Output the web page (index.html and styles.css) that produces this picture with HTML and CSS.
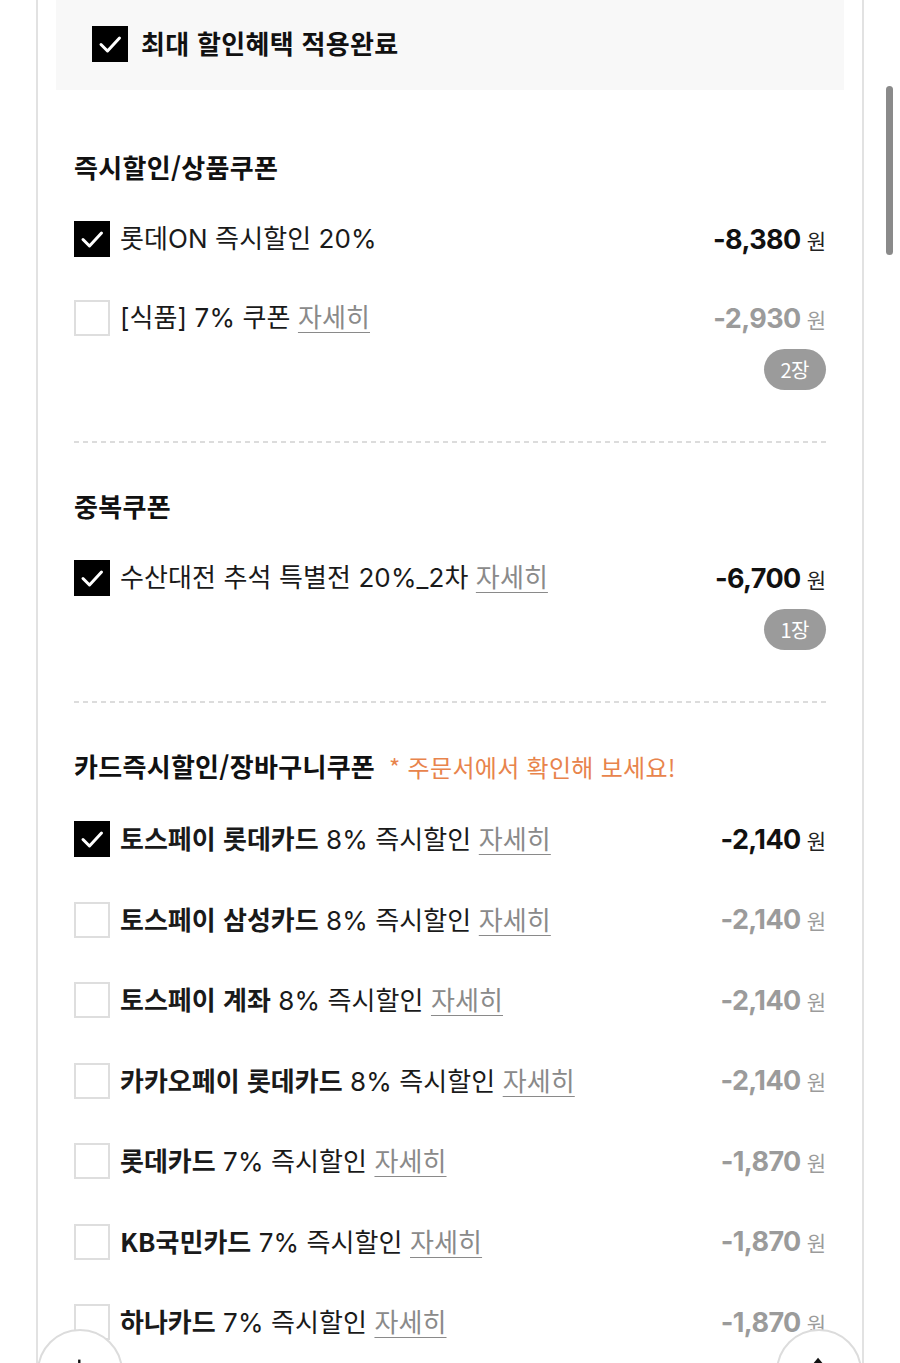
FILE: index.html
```html
<!DOCTYPE html>
<html lang="ko">
<head>
<meta charset="utf-8">
<title>할인혜택</title>
<link rel="stylesheet" href="styles.css">
</head>
<body>
<div class="sheet">
  <div class="summary">
    <span class="cb on"><svg viewBox="0 0 36 36"><path d="M9 18.5 L15.5 25 L27.5 12" /></svg></span>
    <span class="summary-text">최대 할인혜택 적용완료</span>
  </div>

  <section class="group first">
    <h2 class="group-title">즉시할인/상품쿠폰</h2>
    <ul class="items">
      <li class="item">
        <div class="line">
          <span class="cb on"><svg viewBox="0 0 36 36"><path d="M9 18.5 L15.5 25 L27.5 12" /></svg></span>
          <span class="label">롯데ON 즉시할인 20%</span>
          <span class="price"><b>-8,380</b><i>원</i></span>
        </div>
      </li>
      <li class="item off">
        <div class="line">
          <span class="cb"></span>
          <span class="label">[식품] 7% 쿠폰 <u>자세히</u></span>
          <span class="price"><b>-2,930</b><i>원</i></span>
        </div>
        <div class="badge-row"><span class="badge">2장</span></div>
      </li>
    </ul>
  </section>

  <section class="group">
    <h2 class="group-title">중복쿠폰</h2>
    <ul class="items">
      <li class="item">
        <div class="line">
          <span class="cb on"><svg viewBox="0 0 36 36"><path d="M9 18.5 L15.5 25 L27.5 12" /></svg></span>
          <span class="label">수산대전 추석 특별전 20%_2차 <u>자세히</u></span>
          <span class="price"><b>-6,700</b><i>원</i></span>
        </div>
        <div class="badge-row"><span class="badge">1장</span></div>
      </li>
    </ul>
  </section>

  <section class="group last">
    <h2 class="group-title">카드즉시할인/장바구니쿠폰<span class="note">* 주문서에서 확인해 보세요!</span></h2>
    <ul class="items cards">
      <li class="item">
        <div class="line">
          <span class="cb on"><svg viewBox="0 0 36 36"><path d="M9 18.5 L15.5 25 L27.5 12" /></svg></span>
          <span class="label"><strong>토스페이 롯데카드</strong> 8% 즉시할인 <u>자세히</u></span>
          <span class="price"><b>-2,140</b><i>원</i></span>
        </div>
      </li>
      <li class="item off">
        <div class="line">
          <span class="cb"></span>
          <span class="label"><strong>토스페이 삼성카드</strong> 8% 즉시할인 <u>자세히</u></span>
          <span class="price"><b>-2,140</b><i>원</i></span>
        </div>
      </li>
      <li class="item off">
        <div class="line">
          <span class="cb"></span>
          <span class="label"><strong>토스페이 계좌</strong> 8% 즉시할인 <u>자세히</u></span>
          <span class="price"><b>-2,140</b><i>원</i></span>
        </div>
      </li>
      <li class="item off">
        <div class="line">
          <span class="cb"></span>
          <span class="label"><strong>카카오페이 롯데카드</strong> 8% 즉시할인 <u>자세히</u></span>
          <span class="price"><b>-2,140</b><i>원</i></span>
        </div>
      </li>
      <li class="item off">
        <div class="line">
          <span class="cb"></span>
          <span class="label"><strong>롯데카드</strong> 7% 즉시할인 <u>자세히</u></span>
          <span class="price"><b>-1,870</b><i>원</i></span>
        </div>
      </li>
      <li class="item off">
        <div class="line">
          <span class="cb"></span>
          <span class="label"><strong>KB국민카드</strong> 7% 즉시할인 <u>자세히</u></span>
          <span class="price"><b>-1,870</b><i>원</i></span>
        </div>
      </li>
      <li class="item off">
        <div class="line">
          <span class="cb"></span>
          <span class="label"><strong>하나카드</strong> 7% 즉시할인 <u>자세히</u></span>
          <span class="price"><b>-1,870</b><i>원</i></span>
        </div>
      </li>
    </ul>
  </section>
</div>

<div class="scrollbar"></div>

<button class="fab fab-left" aria-label="이전">
  <svg viewBox="0 0 86 86"><rect x="41" y="30" width="2.5" height="20" fill="#111"/></svg>
</button>
<button class="fab fab-right" aria-label="맨 위로">
  <svg viewBox="0 0 86 86"><path d="M42 28 L32 40 L52 40 Z" fill="#111"/></svg>
</button>
</body>
</html>
```
FILE: styles.css
```css
html, body {
  margin: 0;
  padding: 0;
  overflow: hidden;
  height: 1363px;
  background: #fff;
}
body {
  font-family: "Inter", "Noto Sans CJK KR", sans-serif;
  color: #111;
}
.sheet {
  margin-left: 36px;
  width: 824px;
  border-left: 2px solid #e2e2e2;
  border-right: 2px solid #e2e2e2;
  min-height: 1363px;
}
.summary {
  margin: 0 18px;
  height: 90px;
  background: #f8f8f8;
  display: flex;
  align-items: center;
  padding-left: 36px;
  gap: 13px;
}
.summary .cb { margin-top: -2px; }
.summary-text {
  font-family: "Noto Sans CJK KR", sans-serif;
  font-weight: 700;
  font-size: 26px;
  letter-spacing: 0.3px;
  line-height: 36px;
  margin-top: -4px;
}
.cb {
  flex: 0 0 auto;
  width: 36px;
  height: 36px;
  box-sizing: border-box;
  border: 2px solid #dedede;
  background: #fff;
  display: inline-flex;
}
.cb.on {
  background: #000;
  border-color: #000;
}
.cb svg {
  width: 36px;
  height: 36px;
  margin: -2px;
}
.cb svg path {
  fill: none;
  stroke: #fff;
  stroke-width: 3;
  stroke-linecap: round;
  stroke-linejoin: round;
}
.group {
  margin: 0 36px;
  padding: 45px 0 53px;
  background-image: repeating-linear-gradient(to right, #dcdcdc 0 5px, transparent 5px 9px);
  background-size: 100% 2px;
  background-repeat: no-repeat;
  background-position: left bottom;
}
.group.first { padding-top: 59px; }
.group.last { background: none; padding-bottom: 0; }
.group-title {
  margin: 0 0 36px;
  font-family: "Noto Sans CJK KR", sans-serif;
  font-weight: 700;
  font-size: 26px;
  letter-spacing: 0.3px;
  line-height: 36px;
  color: #111;
}
.note {
  margin-left: 14px;
  font-weight: 400;
  font-size: 24px;
  letter-spacing: 0.3px;
  color: #e8844c;
}
.items {
  list-style: none;
  margin: 0;
  padding: 0;
  display: flex;
  flex-direction: column;
  gap: 43px;
}
.items.cards { gap: 44.5px; }
.line {
  display: flex;
  align-items: center;
  height: 36px;
}
.label {
  flex: 1;
  margin-left: 10px;
  font-size: 26px;
  letter-spacing: 0.1px;
  line-height: 36px;
  color: #1a1a1a;
  white-space: nowrap;
}
.label strong {
  font-family: "Noto Sans CJK KR", sans-serif;
  font-weight: 700;
  letter-spacing: 0;
}
.label u {
  color: #8a8a8a;
  text-decoration-thickness: 1px;
  text-underline-offset: 5px;
}
.price {
  display: flex;
  align-items: baseline;
  white-space: nowrap;
}
.price b {
  font-family: "Inter", sans-serif;
  font-weight: 700;
  font-size: 27px;
  letter-spacing: -0.6px;
  color: #111;
}
.price i {
  font-style: normal;
  font-family: "Noto Sans CJK KR", sans-serif;
  font-size: 21px;
  margin-left: 6px;
  color: #222;
}
.item.off .price b,
.item.off .price i { color: #9b9b9b; }
.badge-row {
  display: flex;
  justify-content: flex-end;
  margin-top: 13px;
}
.badge {
  height: 41px;
  line-height: 41px;
  padding: 0 17px;
  border-radius: 21px;
  background: #9b9b9b;
  color: #fff;
  font-family: "Noto Sans CJK KR", sans-serif;
  font-size: 20px;
  letter-spacing: -0.5px;
}
.scrollbar {
  position: fixed;
  left: 886px;
  top: 86px;
  width: 7px;
  height: 169px;
  border-radius: 4px;
  background: #8a8a8a;
}
.fab {
  position: fixed;
  top: 1329px;
  width: 86px;
  height: 86px;
  padding: 0;
  border-radius: 50%;
  border: 2px solid #dcdcdc;
  background: #fff;
  box-sizing: border-box;
}
.fab svg { width: 82px; height: 82px; display: block; }
.fab-left { left: 37px; }
.fab-right { left: 776px; }
```
